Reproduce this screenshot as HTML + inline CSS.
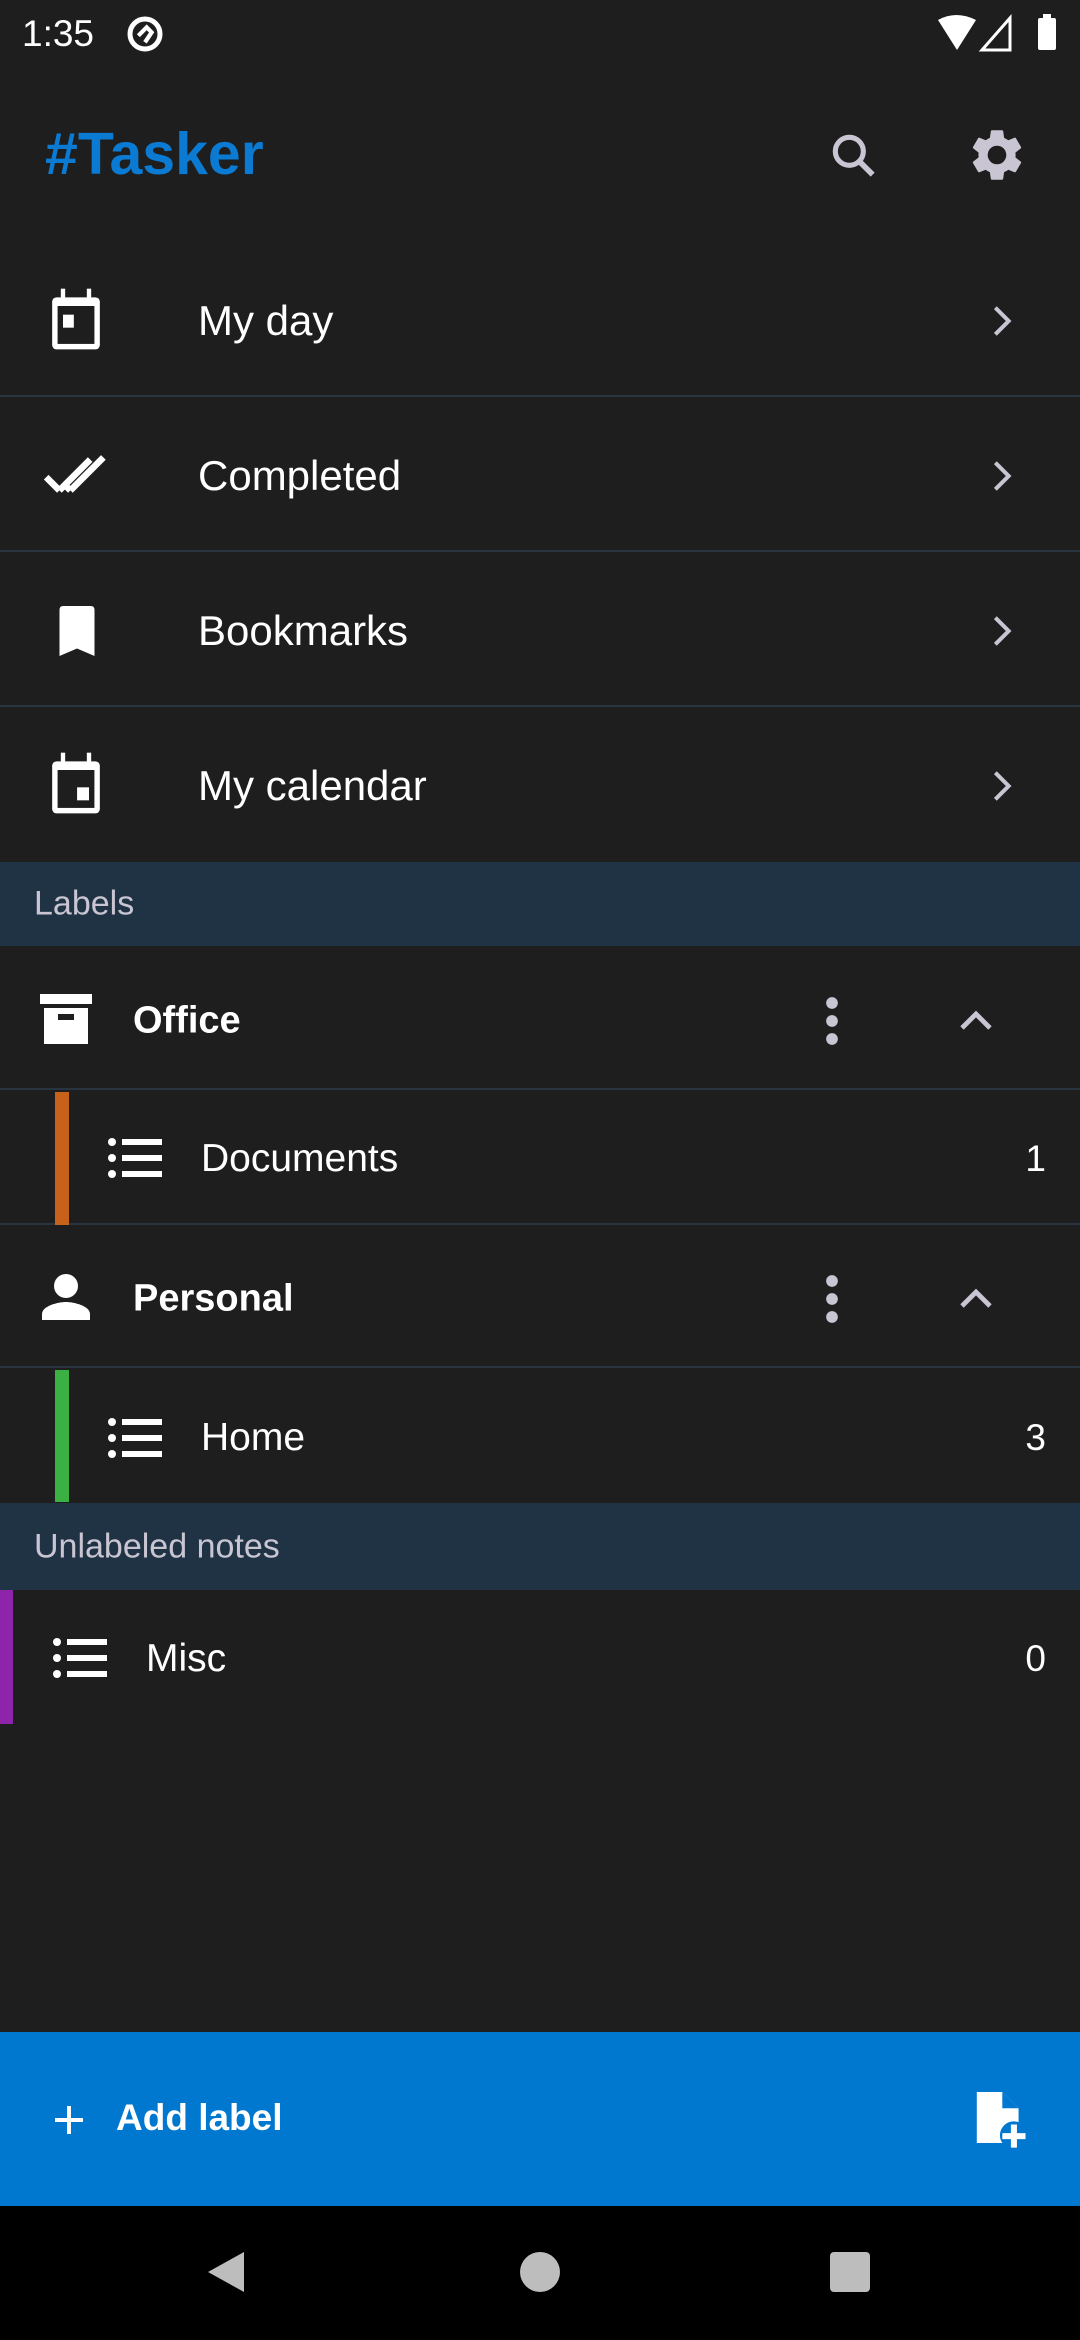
<!DOCTYPE html>
<html><head><meta charset="utf-8"><style>
*{margin:0;padding:0;box-sizing:border-box}
body{width:1080px;height:2340px;background:#1e1e1e;font-family:"Liberation Sans",sans-serif;color:#fff;position:relative;overflow:hidden}
.a{position:absolute}
.row{position:absolute;left:0;width:1080px;border-bottom:2px solid #283440}
.t{position:absolute;font-size:42px;transform:translateY(-50%)}
.hdr{position:absolute;left:0;width:1080px;background:#1f3344}
.hdr span{position:absolute;left:34px;top:50%;transform:translateY(-50%);font-size:34px;color:#c9c5d2}
.chev{position:absolute;left:992px}
.cnt{position:absolute;right:34px;font-size:37px;transform:translateY(-50%)}
</style></head><body>
<div class="a" style="left:22px;top:13px;font-size:37px;color:#fff">1:35</div>
<svg class="a" style="left:124px;top:14px" width="42" height="40" viewBox="0 0 24 24"><circle cx="12" cy="12" r="9" fill="none" stroke="#fff" stroke-width="3"/><path d="M8 13l5-5 3 3-4 6" fill="none" stroke="#fff" stroke-width="2.5"/></svg>
<svg class="a" style="left:936px;top:14px" width="128" height="38" viewBox="0 0 128 38"><path d="M2 6 Q20 -4 40 6 L21 36Z" fill="#fff"/><path d="M74 4 L74 36 L46 36Z" fill="none" stroke="#fff" stroke-width="3"/><rect x="102" y="4" width="18" height="32" rx="2" fill="#fff"/><rect x="107" y="0" width="8" height="5" fill="#fff"/></svg>
<div class="a" style="left:45px;top:120px;font-size:59px;font-weight:bold;color:#0a7ad2">#Tasker</div>
<svg class="a" style="left:826px;top:128px" width="56" height="56" viewBox="0 0 24 24"><circle cx="10" cy="10" r="6" fill="none" stroke="#c9c5d2" stroke-width="2.2"/><path d="M14.5 14.5L20 20" stroke="#c9c5d2" stroke-width="2.4"/></svg>
<svg class="a" style="left:966px;top:124px" width="62" height="62" viewBox="0 0 24 24"><path fill="#c9c5d2" d="M19.14 12.94c.04-.3.06-.61.06-.94 0-.32-.02-.64-.07-.94l2.03-1.58a.49.49 0 0 0 .12-.61l-1.92-3.32a.49.49 0 0 0-.59-.22l-2.39.96c-.5-.38-1.030-.7-1.62-.94l-.36-2.54a.48.48 0 0 0-.48-.41h-3.84a.48.48 0 0 0-.47.41l-.36 2.54c-.59.24-1.13.57-1.62.94l-2.39-.96a.48.48 0 0 0-.59.22L2.74 8.87a.47.47 0 0 0 .12.61l2.03 1.58c-.05.3-.09.63-.09.94s.2.64.07.94l-2.03 1.58a.49.49 0 0 0-.12.61l1.92 3.32c.12.22.37.29.59.22l2.39-.96c.5.38 1.03.7 1.62.94l.36 2.54c.05.24.24.41.48.41h3.84c.24 0 .44-.17.47-.41l.36-2.54c.59-.24 1.13-.56 1.62-.94l2.39.96c.22.08.47 0 .59-.22l1.92-3.32a.47.47 0 0 0-.12-.61l-2.01-1.58zM12 15.6A3.6 3.6 0 1 1 12 8.4a3.6 3.6 0 0 1 0 7.2z"/></svg>
<div class="row" style="top:242px;height:155px"></div>
<div class="row" style="top:397px;height:155px"></div>
<div class="row" style="top:552px;height:155px"></div>
<svg class="a" style="left:50px;top:288px" width="52" height="62" viewBox="0 0 24 28"><rect x="1" y="4" width="22" height="24" rx="2" fill="#fff"/><rect x="3.5" y="8" width="17" height="17.5" fill="#1e1e1e"/><rect x="6" y="12" width="5" height="6" fill="#fff"/><rect x="5" y="0" width="2" height="5" fill="#fff"/><rect x="17" y="0" width="2" height="5" fill="#fff"/></svg>
<div class="t" style="left:198px;top:321px">My day</div>
<svg class="a" style="left:44px;top:448px" width="66" height="54" viewBox="0 0 30 24"><path d="M1 13l6 6M7 19L21 5M12 19L27 4M9 16l3 3" fill="none" stroke="#fff" stroke-width="3"/></svg>
<div class="t" style="left:198px;top:476px">Completed</div>
<svg class="a" style="left:57px;top:604px" width="40" height="54" viewBox="0 0 16 20"><path d="M1 1.5Q1 0 2.5 0h11Q15 0 15 1.5V20l-7-3-7 3z" fill="#fff"/></svg>
<div class="t" style="left:198px;top:631px">Bookmarks</div>
<svg class="a" style="left:50px;top:752px" width="52" height="62" viewBox="0 0 24 28"><rect x="1" y="4" width="22" height="24" rx="2" fill="#fff"/><rect x="3.5" y="8" width="17" height="17.5" fill="#1e1e1e"/><rect x="12.5" y="16" width="5.5" height="6" fill="#fff"/><rect x="5" y="0" width="2" height="5" fill="#fff"/><rect x="17" y="0" width="2" height="5" fill="#fff"/></svg>
<div class="t" style="left:198px;top:786px">My calendar</div>
<svg class="chev" style="top:303px" width="20" height="36" viewBox="0 0 12 20"><path d="M2 2l8 8-8 8" fill="none" stroke="#c9c5d2" stroke-width="2.4"/></svg>
<svg class="chev" style="top:458px" width="20" height="36" viewBox="0 0 12 20"><path d="M2 2l8 8-8 8" fill="none" stroke="#c9c5d2" stroke-width="2.4"/></svg>
<svg class="chev" style="top:613px" width="20" height="36" viewBox="0 0 12 20"><path d="M2 2l8 8-8 8" fill="none" stroke="#c9c5d2" stroke-width="2.4"/></svg>
<svg class="chev" style="top:768px" width="20" height="36" viewBox="0 0 12 20"><path d="M2 2l8 8-8 8" fill="none" stroke="#c9c5d2" stroke-width="2.4"/></svg>
<div class="hdr" style="top:862px;height:84px"><span>Labels</span></div>
<div class="row" style="top:946px;height:144px"></div>
<svg class="a" style="left:40px;top:994px" width="52" height="50" viewBox="0 0 26 25"><rect x="0" y="0" width="26" height="5" fill="#fff"/><rect x="2" y="7" width="22" height="18" fill="#fff"/><rect x="9" y="10" width="8" height="3" fill="#1e1e1e"/></svg>
<div class="t" style="left:133px;top:1021px;font-weight:bold;font-size:38px">Office</div>
<svg class="a" style="left:822px;top:994px" width="20" height="54" viewBox="0 0 8 24"><circle cx="4" cy="4" r="2.6" fill="#c9c5d2"/><circle cx="4" cy="12" r="2.6" fill="#c9c5d2"/><circle cx="4" cy="20" r="2.6" fill="#c9c5d2"/></svg>
<svg class="a" style="left:958px;top:1008px" width="36" height="24" viewBox="0 0 18 12"><path d="M2 10l7-7 7 7" fill="none" stroke="#c9c5d2" stroke-width="2.4"/></svg>
<div class="row" style="top:1090px;height:135px"></div>
<div class="a" style="left:55px;top:1092px;width:14px;height:133px;background:#c8621a"></div>
<svg class="a" style="left:108px;top:1138px" width="54" height="40" viewBox="0 0 27 20"><circle cx="2" cy="2" r="2" fill="#fff"/><circle cx="2" cy="10" r="2" fill="#fff"/><circle cx="2" cy="18" r="2" fill="#fff"/><rect x="7" y="0.5" width="20" height="3" fill="#fff"/><rect x="7" y="8.5" width="20" height="3" fill="#fff"/><rect x="7" y="16.5" width="20" height="3" fill="#fff"/></svg>
<div class="t" style="left:201px;top:1159px;font-size:39px">Documents</div>
<div class="cnt" style="top:1159px">1</div>
<div class="row" style="top:1225px;height:143px"></div>
<svg class="a" style="left:42px;top:1274px" width="48" height="46" viewBox="0 0 24 23"><circle cx="12" cy="6" r="6" fill="#fff"/><path d="M0 23v-3c0-4 8-6 12-6s12 2 12 6v3z" fill="#fff"/></svg>
<div class="t" style="left:133px;top:1299px;font-weight:bold;font-size:38px">Personal</div>
<svg class="a" style="left:822px;top:1272px" width="20" height="54" viewBox="0 0 8 24"><circle cx="4" cy="4" r="2.6" fill="#c9c5d2"/><circle cx="4" cy="12" r="2.6" fill="#c9c5d2"/><circle cx="4" cy="20" r="2.6" fill="#c9c5d2"/></svg>
<svg class="a" style="left:958px;top:1286px" width="36" height="24" viewBox="0 0 18 12"><path d="M2 10l7-7 7 7" fill="none" stroke="#c9c5d2" stroke-width="2.4"/></svg>
<div class="a" style="left:55px;top:1370px;width:14px;height:132px;background:#3bb143"></div>
<svg class="a" style="left:108px;top:1418px" width="54" height="40" viewBox="0 0 27 20"><circle cx="2" cy="2" r="2" fill="#fff"/><circle cx="2" cy="10" r="2" fill="#fff"/><circle cx="2" cy="18" r="2" fill="#fff"/><rect x="7" y="0.5" width="20" height="3" fill="#fff"/><rect x="7" y="8.5" width="20" height="3" fill="#fff"/><rect x="7" y="16.5" width="20" height="3" fill="#fff"/></svg>
<div class="t" style="left:201px;top:1438px;font-size:39px">Home</div>
<div class="cnt" style="top:1438px">3</div>
<div class="hdr" style="top:1503px;height:87px"><span>Unlabeled notes</span></div>
<div class="a" style="left:0;top:1590px;width:13px;height:134px;background:#8e24aa"></div>
<svg class="a" style="left:53px;top:1638px" width="54" height="40" viewBox="0 0 27 20"><circle cx="2" cy="2" r="2" fill="#fff"/><circle cx="2" cy="10" r="2" fill="#fff"/><circle cx="2" cy="18" r="2" fill="#fff"/><rect x="7" y="0.5" width="20" height="3" fill="#fff"/><rect x="7" y="8.5" width="20" height="3" fill="#fff"/><rect x="7" y="16.5" width="20" height="3" fill="#fff"/></svg>
<div class="t" style="left:146px;top:1659px;font-size:39px">Misc</div>
<div class="cnt" style="top:1659px">0</div>
<div class="a" style="left:0;top:2032px;width:1080px;height:174px;background:#0078d0"></div>
<svg class="a" style="left:53px;top:2104px" width="32" height="32" viewBox="0 0 16 16"><path d="M8 1v14M1 8h14" stroke="#fff" stroke-width="2"/></svg>
<div class="a" style="left:116px;top:2097px;font-size:37px;font-weight:bold">Add label</div>
<svg class="a" style="left:972px;top:2092px" width="56" height="58" viewBox="0 0 24 25"><path d="M2 0h11l7 7v6a6 6 0 0 0-7 9H2z" fill="#fff"/><path d="M13 0v7h7" fill="#0078d0"/><path d="M18 14v10M13 19h10" stroke="#fff" stroke-width="2.6"/></svg>
<div class="a" style="left:0;top:2206px;width:1080px;height:134px;background:#000"></div>
<svg class="a" style="left:204px;top:2250px" width="44" height="44" viewBox="0 0 22 22"><path d="M20 1v20L2 11z" fill="#bdbdbd"/></svg>
<div class="a" style="left:520px;top:2252px;width:40px;height:40px;border-radius:50%;background:#bdbdbd"></div>
<div class="a" style="left:830px;top:2252px;width:40px;height:40px;border-radius:4px;background:#bdbdbd"></div>
</body></html>
